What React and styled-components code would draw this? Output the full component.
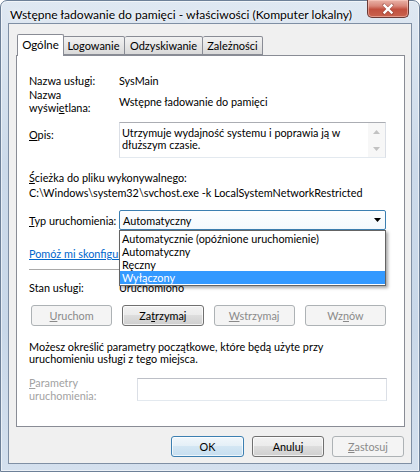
import React from 'react';
import styled, { createGlobalStyle } from 'styled-components';

const Global = createGlobalStyle`
  html, body { margin: 0; padding: 0; background: #ffffff; }
  body {
    width: 420px; height: 472px; overflow: hidden;
    font-family: "Segoe UI", Lato, "Noto Sans", sans-serif;
    font-size: 10.85px; color: #000;
  }
  * { box-sizing: border-box; }
`;

const Window = styled.div`
  width: 420px;
  height: 472px;
  display: flex;
  flex-direction: column;
  border: 1px solid #6d8098;
  border-radius: 7px 7px 0 0;
  background: linear-gradient(180deg, #dfe8f2 0%, #ccdaea 35%, #c9d8e9 70%, #d4e0ee 100%);
  box-shadow: inset 0 0 0 1px rgba(255, 255, 255, 0.55);
`;

const TitleBar = styled.div`
  height: 22px;
  display: flex;
  align-items: flex-start;
  justify-content: space-between;
  padding-left: 9px;
  flex-shrink: 0;
`;

const TitleText = styled.div`
  margin-top: 6px;
  font-size: 12.1px;
  line-height: 16px;
  white-space: nowrap;
  text-shadow: 0 0 6px rgba(255, 255, 255, 0.95), 0 0 2px rgba(255, 255, 255, 0.9);
`;

const CloseButton = styled.div`
  width: 42px;
  height: 18px;
  margin-top: -1px;
  margin-right: 10px;
  border: 1px solid #6a3a36;
  border-top: none;
  border-radius: 0 0 5px 5px;
  background: linear-gradient(180deg, #e9b3a8 0%, #d9877a 35%, #c2503f 55%, #c9624e 100%);
  box-shadow: inset 0 0 0 1px rgba(255, 210, 200, 0.5);
  display: flex;
  align-items: center;
  justify-content: center;
`;

const Client = styled.div`
  flex: 1;
  margin: 0 7px 7px;
  border: 1px solid #7f8fa4;
  background: #f0f0f0;
  padding: 10px 6px 6px 7px;
  display: flex;
  flex-direction: column;
`;

const TabStrip = styled.div`
  height: 21px;
  display: flex;
  align-items: flex-end;
  padding-left: 1px;
  flex-shrink: 0;
`;

const Tab = styled.div`
  width: ${p => p.$w}px;
  height: ${p => (p.$active ? 22 : 19)}px;
  margin-bottom: ${p => (p.$active ? -1 : 0)}px;
  margin-right: ${p => (p.$active ? -1 : 0)}px;
  position: relative;
  z-index: ${p => (p.$active ? 2 : 1)};
  border: 1px solid #898c95;
  border-bottom: ${p => (p.$active ? 'none' : '1px solid #898c95')};
  border-left: ${p => (p.$first || p.$active ? '1px solid #898c95' : 'none')};
  border-radius: 2px 2px 0 0;
  background: ${p =>
    p.$active ? '#ffffff' : 'linear-gradient(180deg, #f2f2f2 0%, #e6e6e6 50%, #d9d9d9 100%)'};
  display: flex;
  justify-content: center;
  padding-top: ${p => (p.$active ? 3 : 2)}px;
  line-height: 14px;
  font-size: ${p => (p.$active ? 11.5 : 11)}px;
  white-space: nowrap;
`;

const Panel = styled.div`
  flex: 1;
  border: 1px solid #898c95;
  background: #ffffff;
  padding: 17px 18px 0 12px;
  display: flex;
  flex-direction: column;
`;

const Row = styled.div`
  display: flex;
  align-items: ${p => p.$align || 'center'};
  margin-top: ${p => p.$mt || 0}px;
  position: relative;
  z-index: ${p => p.$z || 'auto'};
`;

const Label = styled.div`
  width: ${p => p.$w || 90}px;
  flex-shrink: 0;
  line-height: 13px;
  padding-top: ${p => p.$pt || 0}px;
  color: ${p => (p.$disabled ? '#a2a2a2' : '#000')};
  white-space: nowrap;
`;

const Value = styled.div`
  line-height: 13px;
  white-space: nowrap;
`;

const U = styled.span`
  text-decoration: underline;
  text-underline-offset: 1px;
`;

const TextBlock = styled.div`
  margin-top: ${p => p.$mt || 0}px;
  line-height: ${p => p.$lh || 13}px;
  white-space: nowrap;
`;

const TextArea = styled.div`
  flex: 1;
  height: 36px;
  border: 1px solid #dbdfe6;
  border-top-color: #abadb3;
  border-bottom-color: #e3e9ef;
  display: flex;
`;

const AreaText = styled.div`
  flex: 1;
  padding: 4px 0 0 2px;
  line-height: 12px;
  white-space: nowrap;
`;

const ScrollBar = styled.div`
  width: 17px;
  background: #f7f7f7;
  display: flex;
  flex-direction: column;
`;

const ScrollArrow = styled.div`
  flex: 1;
  display: flex;
  align-items: center;
  justify-content: center;
`;

const ComboWrap = styled.div`
  flex: 1;
  position: relative;
  z-index: 5;
`;

const Combo = styled.div`
  height: 20px;
  border: 1px solid #3c7fb1;
  border-radius: 2px;
  background: linear-gradient(180deg, #fdfeff 0%, #f3f9fd 100%);
  display: flex;
  align-items: center;
  justify-content: space-between;
  padding: 0 4px 0 3px;
  line-height: 13px;
`;

const DropList = styled.div`
  position: absolute;
  top: 100%;
  left: 0;
  right: 0;
  border: 1px solid #646464;
  background: #ffffff;
  padding: 1px 0;
  box-shadow: 2px 2px 3px rgba(0, 0, 0, 0.35);
`;

const DropItem = styled.div`
  height: 13px;
  line-height: 13px;
  padding-left: 2px;
  white-space: nowrap;
  background: ${p => (p.$selected ? '#3399ff' : 'transparent')};
  color: ${p => (p.$selected ? '#ffffff' : '#000')};
`;

const Link = styled.div`
  margin-top: ${p => p.$mt || 0}px;
  line-height: 13px;
  color: #0066cc;
  text-decoration: underline;
  white-space: nowrap;
`;

const Separator = styled.div`
  margin-top: ${p => p.$mt || 0}px;
  height: 1px;
  background: #a9a9a9;
`;

const ButtonGrid = styled.div`
  margin-top: ${p => p.$mt || 0}px;
  margin-left: 2px;
  display: grid;
  grid-template-columns: repeat(4, 1fr);
  column-gap: 10px;
`;

const Button = styled.div`
  height: ${p => p.$h || 21}px;
  width: ${p => (p.$w ? `${p.$w}px` : 'auto')};
  border: 1px solid
    ${p => (p.$disabled ? '#adb2b5' : p.$default ? '#3c7fb1' : '#707070')};
  border-radius: 3px;
  background: ${p =>
    p.$disabled
      ? '#f4f4f4'
      : p.$default
      ? 'linear-gradient(180deg, #f1f7fb 0%, #e4eff7 49%, #d3e6f3 50%, #c6def0 100%)'
      : 'linear-gradient(180deg, #f2f2f2 0%, #ebebeb 49%, #dddddd 50%, #cfcfcf 100%)'};
  box-shadow: inset 0 0 0 1px rgba(255, 255, 255, ${p => (p.$disabled ? 0 : 0.7)});
  color: ${p => (p.$disabled ? '#8a8a8a' : '#000')};
  display: flex;
  align-items: center;
  justify-content: center;
  line-height: 13px;
  white-space: nowrap;
`;

const Input = styled.div`
  flex: 1;
  height: 23px;
  margin-right: -1px;
  border: 1px solid #dbdfe6;
  border-top-color: #bcbfc6;
  border-bottom-color: #e3e9ef;
  background: #ffffff;
`;

const Footer = styled.div`
  margin-top: 9px;
  display: flex;
  justify-content: flex-end;
  gap: 8px;
  padding-right: 1px;
`;

const CloseX = () => (
  <svg width="14" height="12" viewBox="0 0 14 12">
    <path d="M3 2 L11 10 M11 2 L3 10" stroke="#5a2520" strokeWidth="3.4" strokeLinecap="round" opacity="0.35" />
    <path d="M3.5 2.5 L10.5 9.5 M10.5 2.5 L3.5 9.5" stroke="#ffffff" strokeWidth="2.4" strokeLinecap="square" />
  </svg>
);

const Triangle = ({ dir = 'down', color = '#000', w = 7 }) => (
  <svg width={w} height="4" viewBox="0 0 7 4">
    {dir === 'down' ? (
      <path d="M0 0 H7 L3.5 4 Z" fill={color} />
    ) : (
      <path d="M0 4 H7 L3.5 0 Z" fill={color} />
    )}
  </svg>
);

export default function App() {
  return (
    <>
      <Global />
      <Window>
        <TitleBar>
          <TitleText>Wstępne ładowanie do pamięci - właściwości (Komputer lokalny)</TitleText>
          <CloseButton>
            <CloseX />
          </CloseButton>
        </TitleBar>
        <Client>
          <TabStrip>
            <Tab $w={47} $active $first>Ogólne</Tab>
            <Tab $w={62}>Logowanie</Tab>
            <Tab $w={78}>Odzyskiwanie</Tab>
            <Tab $w={60}>Zależności</Tab>
          </TabStrip>
          <Panel>
            <Row $mt={1}>
              <Label>Nazwa usługi:</Label>
              <Value>SysMain</Value>
            </Row>
            <Row $mt={1}>
              <Label>
                Nazwa
                <br />
                wyświ<U>e</U>tlana:
              </Label>
              <Value>Wstępne ładowanie do pamięci</Value>
            </Row>
            <Row $mt={8} $align="flex-start">
              <Label $pt={6}>
                <U>O</U>pis:
              </Label>
              <TextArea>
                <AreaText>
                  Utrzymuje wydajność systemu i poprawia ją w
                  <br />
                  dłuższym czasie.
                </AreaText>
                <ScrollBar>
                  <ScrollArrow>
                    <Triangle dir="up" color="#c2c2c2" />
                  </ScrollArrow>
                  <ScrollArrow>
                    <Triangle dir="down" color="#c2c2c2" />
                  </ScrollArrow>
                </ScrollBar>
              </TextArea>
            </Row>
            <TextBlock $mt={12} $lh={15}>
              <U>Ś</U>cieżka do pliku wykonywalnego:
              <br />
              C:\Windows\system32\svchost.exe -k LocalSystemNetworkRestricted
            </TextBlock>
            <Row $mt={10} $z={5}>
              <Label>
                <U>T</U>yp uruchomienia:
              </Label>
              <ComboWrap>
                <Combo>
                  <span>Automatyczny</span>
                  <Triangle />
                </Combo>
                <DropList>
                  <DropItem>Automatycznie (opóźnione uruchomienie)</DropItem>
                  <DropItem>Automatyczny</DropItem>
                  <DropItem>Ręczny</DropItem>
                  <DropItem $selected>Wyłączony</DropItem>
                </DropList>
              </ComboWrap>
            </Row>
            <Link $mt={17}>Pomóż mi skonfigurować ustawienia uruchamiania usługi.</Link>
            <Separator $mt={9} />
            <Row $mt={11}>
              <Label>Stan usługi:</Label>
              <Value>Uruchomiono</Value>
            </Row>
            <ButtonGrid $mt={11}>
              <Button $disabled>
                <span>
                  <U>U</U>ruchom
                </span>
              </Button>
              <Button>
                <span>
                  Za<U>t</U>rzymaj
                </span>
              </Button>
              <Button $disabled>
                <span>
                  <U>W</U>strzymaj
                </span>
              </Button>
              <Button $disabled>
                <span>
                  Wz<U>n</U>ów
                </span>
              </Button>
            </ButtonGrid>
            <TextBlock $mt={15} $lh={12}>
              Możesz określić parametry początkowe, które będą użyte przy
              <br />
              uruchomieniu usługi z tego miejsca.
            </TextBlock>
            <Row $mt={11}>
              <Label $w={108} $disabled>
                <U>P</U>arametry
                <br />
                uruchomienia:
              </Label>
              <Input />
            </Row>
          </Panel>
          <Footer>
            <Button $default $w={73}>OK</Button>
            <Button $w={72}>Anuluj</Button>
            <Button $disabled $w={72}>
              <span>
                <U>Z</U>astosuj
              </span>
            </Button>
          </Footer>
        </Client>
      </Window>
    </>
  );
}
